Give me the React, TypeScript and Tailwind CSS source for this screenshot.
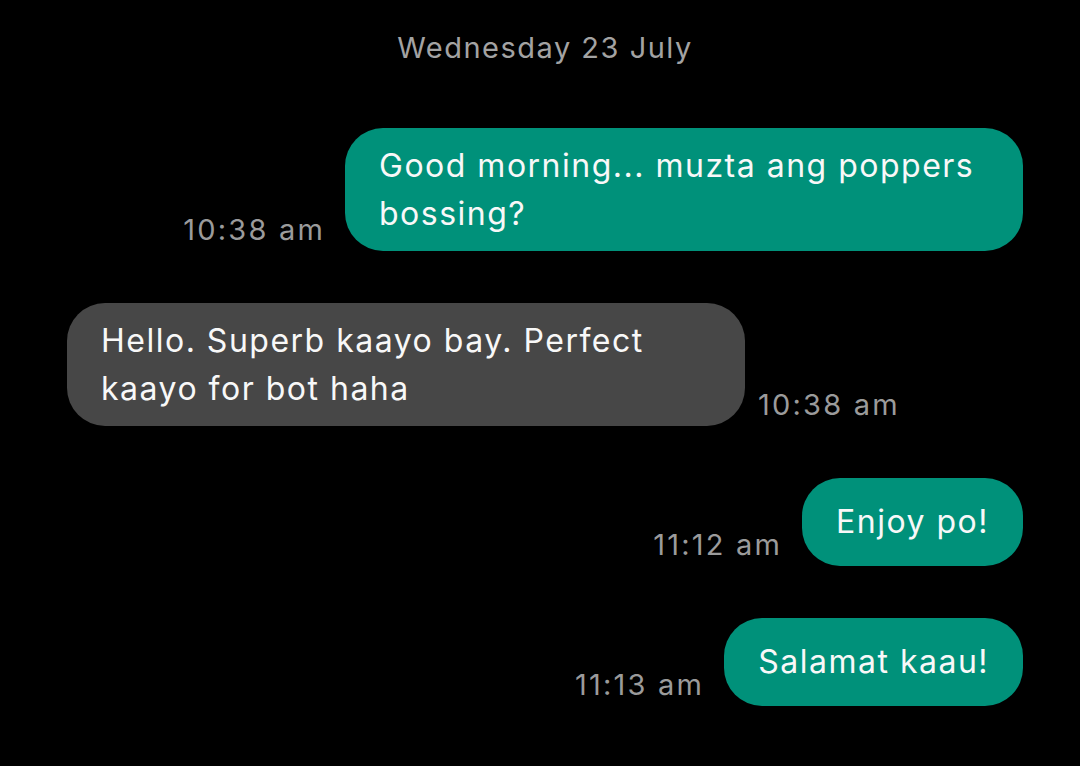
type Message = {
  id: number;
  text: string;
  time: string;
  outgoing: boolean;
};

const messages: Message[] = [
  { id: 1, text: "Good morning... muzta ang poppers bossing?", time: "10:38 am", outgoing: true },
  { id: 2, text: "Hello. Superb kaayo bay. Perfect kaayo for bot haha", time: "10:38 am", outgoing: false },
  { id: 3, text: "Enjoy po!", time: "11:12 am", outgoing: true },
  { id: 4, text: "Salamat kaau!", time: "11:13 am", outgoing: true },
];

function Time({ value }: { value: string }) {
  return (
    <span className="mb-[7px] shrink-0 whitespace-nowrap text-[29px] leading-[29px] tracking-[2.2px] text-[#9b9b9b]">
      {value}
    </span>
  );
}

function Bubble({ message }: { message: Message }) {
  const colour = message.outgoing ? "bg-[#00917a]" : "bg-[#474747]";
  return (
    <div
      className={`${colour} flex min-h-[88px] max-w-[678px] items-center rounded-[38px] px-[34px] py-[14px] text-[32px] leading-[47.5px] tracking-[1.5px] text-[#f8f8f8]`}
    >
      {message.text}
    </div>
  );
}

export default function App() {
  return (
    <main
      className="min-h-screen bg-black pl-[67px] pr-[57px] pt-[31px]"
      style={{ fontFamily: "Inter, 'Noto Sans', sans-serif" }}
    >
      <div className="text-center text-[29px] leading-[34px] tracking-[1.5px] text-[#a3a3a3]">
        Wednesday 23 July
      </div>

      <div className="mt-[63px] flex flex-col gap-[52px]">
        {messages.map((m) =>
          m.outgoing ? (
            <div key={m.id} className="flex items-end justify-end gap-[20px]">
              <Time value={m.time} />
              <Bubble message={m} />
            </div>
          ) : (
            <div key={m.id} className="flex items-end justify-start gap-[13px]">
              <Bubble message={m} />
              <Time value={m.time} />
            </div>
          )
        )}
      </div>
    </main>
  );
}
